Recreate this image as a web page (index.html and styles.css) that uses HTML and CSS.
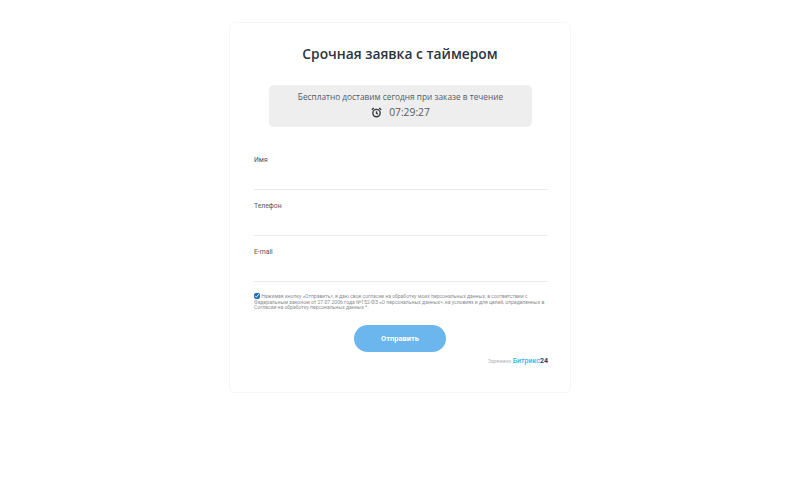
FILE: index.html
```html
<!DOCTYPE html>
<html lang="ru">
<head>
  <meta charset="UTF-8" />
  <meta name="viewport" content="width=device-width, initial-scale=1.0"/>
  <title>Срочная заявка с таймером</title>
  <link rel="stylesheet" href="styles.css">
</head>
<body>
  <div class="form-box">
    <h1>Срочная заявка с таймером</h1>

    <div class="timer-box">
      <p>Бесплатно доставим сегодня при заказе в течение</p>
      <div class="timer">
        <svg width="11" height="11" viewBox="0 0 12 12" fill="none" stroke="#33383e" stroke-width="1.5">
          <circle cx="6" cy="6.6" r="4"/>
          <path d="M6 4.6v2.2l1.4 1"/>
          <path d="M.9 3 3 1M11.1 3 9 1" stroke-width="1.6"/>
        </svg>
        <span>07:29:27</span>
      </div>
    </div>

    <form>
      <div class="field">
        <label for="name">Имя</label>
        <input type="text" id="name" />
      </div>
      <div class="field">
        <label for="phone">Телефон</label>
        <input type="text" id="phone" />
      </div>
      <div class="field">
        <label for="email">E-mail</label>
        <input type="text" id="email" />
      </div>

      <p class="agree">
        <input type="checkbox" checked />
        Нажимая кнопку «Отправить», я даю свое согласие на обработку моих персональных данных, в соответствии с Федеральным законом от 27.07.2006 года №152-ФЗ «О персональных данных», на условиях и для целей, определенных в Согласии на обработку персональных данных *.
      </p>

      <button type="submit">Отправить</button>
    </form>

    <div class="powered">Заряжено <span class="b24">Битрикс<b>24</b></span></div>
  </div>
</body>
</html>
```

FILE: styles.css
```css
* {
  margin: 0;
  padding: 0;
  box-sizing: border-box;
}

body {
  font-family: 'Open Sans', sans-serif;
  background: #fff;
  height: 500px;
  overflow: hidden;
  padding-top: 22px;
}

.form-box {
  width: 342px;
  height: 371px;
  margin: 0 auto;
  border: 1px solid #f6f6f6;
  border-radius: 6px;
  padding: 0 22px 0 24px;
}

.form-box h1 {
  margin-top: 20px;
  padding-right: 2px;
  font-size: 13.8px;
  line-height: 21px;
  font-weight: 600;
  color: #2c3440;
  text-align: center;
}

.timer-box {
  width: 263px;
  height: 42px;
  margin: 21px 0 0 15px;
  padding-top: 5px;
  background: #eeeeee;
  border-radius: 5px;
  text-align: center;
  color: #555a60;
}

.timer-box p {
  font-size: 8.3px;
  line-height: 14px;
}

.timer {
  display: flex;
  align-items: center;
  justify-content: center;
  gap: 7px;
  font-size: 10.3px;
  line-height: 16px;
}

.field {
  height: 46px;
}

form {
  margin-top: 17px;
}

.field label {
  display: block;
  padding-top: 11px;
  font-family: 'Roboto', sans-serif;
  font-size: 6.8px;
  line-height: 11px;
  color: #555;
}

.field input {
  display: block;
  width: 100%;
  height: 24px;
  border: none;
  border-bottom: 1px solid #ebebeb;
  outline: none;
}

.agree {
  margin-top: 11px;
  font-family: 'Roboto', sans-serif;
  font-size: 5.05px;
  line-height: 5.6px;
  color: #8a8d91;
}

.agree input {
  width: 6px;
  height: 6px;
  vertical-align: -1px;
  accent-color: #1e6fc0;
}

button {
  display: block;
  width: 92px;
  height: 27px;
  margin: 14px 0 0 100px;
  border: none;
  border-radius: 14px;
  background: #6cb6ee;
  color: #fff;
  font-family: 'Roboto', sans-serif;
  font-size: 7.5px;
  font-weight: 700;
}

.powered {
  margin-top: 5px;
  text-align: right;
  font-family: 'Roboto', sans-serif;
  font-size: 5px;
  line-height: 9px;
  color: #b5b8bb;
}

.b24 {
  font-size: 7px;
  font-weight: 500;
  color: #2fb6e4;
}

.b24 b {
  color: #1f4766;
}
```
